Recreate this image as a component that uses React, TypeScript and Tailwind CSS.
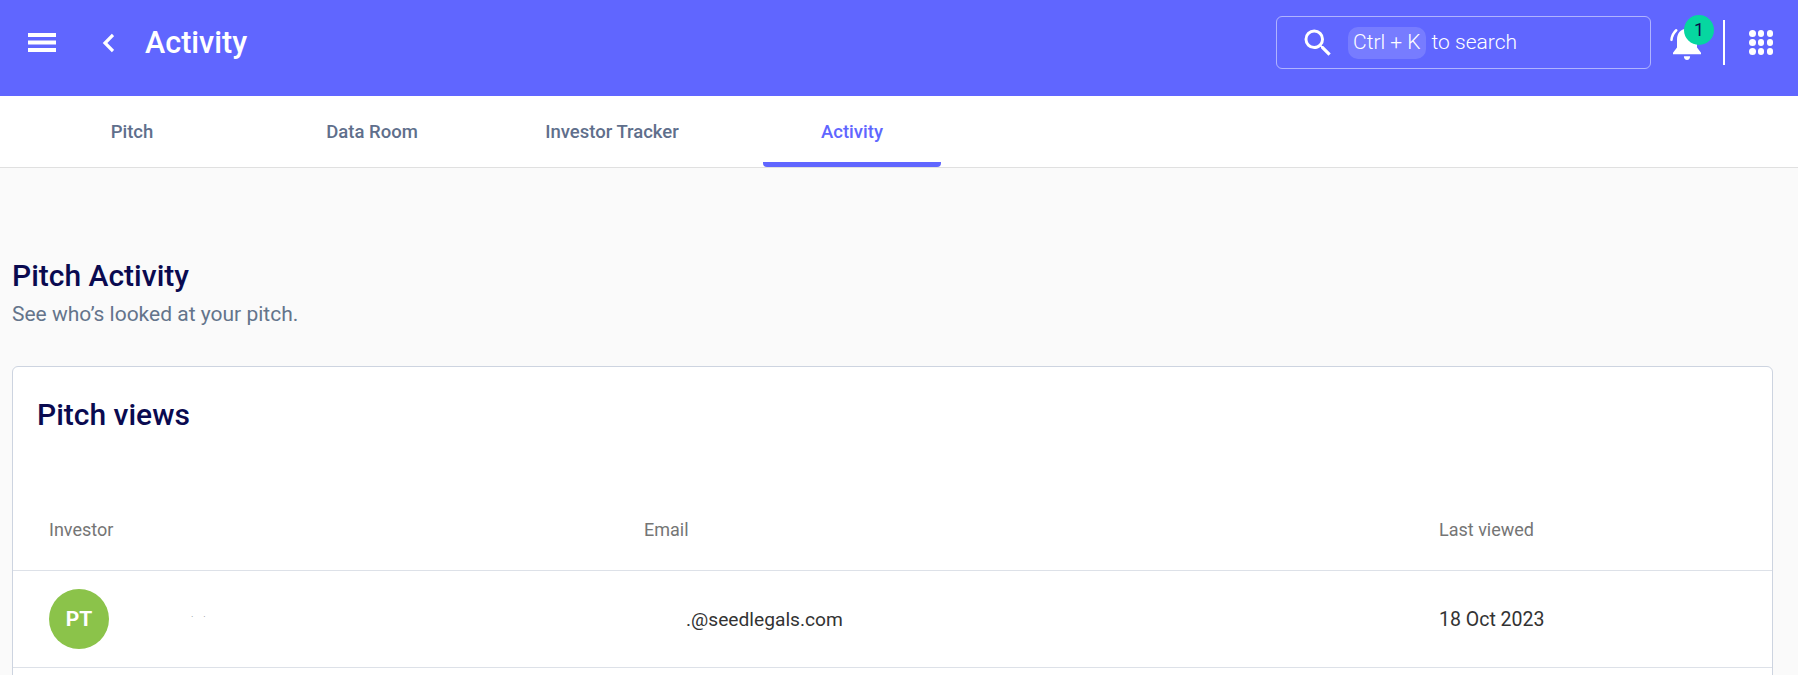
const tabs = ['Pitch', 'Data Room', 'Investor Tracker', 'Activity'];

function MenuIcon() {
  return (
    <svg viewBox="0 0 28 19" className="w-7 h-[19px]" fill="currentColor">
      <rect y="0" width="28" height="4" />
      <rect y="7.500" width="28" height="4" />
      <rect y="15" width="28" height="4" />
    </svg>
  );
}

function BackIcon() {
  return (
    <svg viewBox="0 0 12 20" className="w-3 h-5" fill="none" stroke="currentColor" strokeWidth="3.200">
      <path d="M11 2 L3 10 L11 18" />
    </svg>
  );
}

function SearchIcon() {
  return (
    <svg viewBox="0 0 24 24" className="w-9 h-9" fill="currentColor">
      <path d="M15.500 14h-.79l-.28-.27A6.471 6.471 0 0 0 16 9.500 6.500 6.500 0 1 0 9.500 16c1.610 0 3.090-.59 4.230-1.570l.27.28v.79l5 4.990L20.490 19l-4.990-5zm-6 0C7.010 14 5 11.990 5 9.500S7.010 5 9.500 5 14 7.010 14 9.500 11.990 14 9.500 14z" />
    </svg>
  );
}

function BellIcon() {
  return (
    <svg viewBox="0 0 32 32" className="w-10 h-10 text-white" fill="currentColor">
      <path d="M16 4.500c-5 0-8 3.600-8 8.500v6.500l-3.200 4.200v1.300h22.400v-1.300L24 19.500V13c0-4.900-3-8.500-8-8.500z" />
      <path d="M13.500 26.500h5c0 1.700-1 3-2.500 3s-2.500-1.300-2.500-3z" />
      <path d="M3.600 13.500c.3-3.300 1.500-5.600 3.800-7.700" fill="none" stroke="currentColor" strokeWidth="2" strokeLinecap="round" />
    </svg>
  );
}

function GridIcon() {
  return (
    <div className="grid grid-cols-3 gap-[2.500px] w-6">
      {Array.from({ length: 9 }).map((_, i) => (
        <div key={i} className="w-[6.500px] h-[6.500px] rounded-full bg-white" />
      ))}
    </div>
  );
}

export default function App() {
  return (
    <div className="h-[675px] overflow-hidden bg-[#fafafa] font-['Roboto',sans-serif]">
      {/* Top bar */}
      <header className="h-24 pb-[11px] bg-[#6066ff] flex items-center text-white">
        <div className="ml-7">
          <MenuIcon />
        </div>
        <div className="ml-[46px]">
          <BackIcon />
        </div>
        <h1 className="ml-[31px] pt-[2px] text-[30.500px] font-medium leading-none">Activity</h1>
        <div className="ml-auto flex items-center h-[53px] w-[375px] rounded-md border border-white/50 pl-[23px]">
          <SearchIcon />
          <span className="ml-[12px] px-[5px] h-8 pt-[1px] flex items-center rounded-[10px] bg-white/15 text-[21px] font-light">Ctrl + K</span>
          <span className="ml-[6px] pt-[1px] text-[21px] font-light">to search</span>
        </div>
        <div className="relative ml-4">
          <BellIcon />
          <div className="absolute -top-2 left-[17px] w-[30px] h-[30px] rounded-full bg-[#06d6a0] flex items-center justify-center text-lg text-[#0a0a4a]">1</div>
        </div>
        <div className="ml-4 w-[2px] h-[45px] bg-white" />
        <div className="ml-6 mr-[25px]">
          <GridIcon />
        </div>
      </header>

      {/* Tabs */}
      <nav className="h-[72px] bg-white border-b border-[#e0e0e0] flex pl-3">
        {tabs.map((tab) => (
          <div key={tab} className="w-60 flex justify-center">
            <div className={`w-[178px] pt-[8px] flex items-center justify-center text-[18.500px] font-medium border-b-[5px] rounded-b-sm ${tab === 'Activity' ? 'text-[#6066ff] border-[#6066ff]' : 'text-[#5f6f8c] border-transparent'}`}>
              {tab}
            </div>
          </div>
        ))}
      </nav>

      <main className="pl-3 pr-[25px] pt-[90px]">
        <h2 className="text-[30px] leading-[36px] font-medium text-[#0a0a50]">Pitch Activity</h2>
        <p className="mt-[6px] text-[21px] leading-7 text-[#64748b]">See who’s looked at your pitch.</p>

        {/* Pitch views card */}
        <section className="mt-[38px] bg-white border border-[#cdd4e0] rounded-md">
          <h3 className="pl-6 pt-[28px] h-[126px] text-[30px] leading-[40px] font-medium text-[#0a0a50]">Pitch views</h3>
          <div className="h-[78px] flex items-center pl-9 text-[18px] text-[#757575] border-b border-[#dde1e8]">
            <div className="w-[595px] pb-[5px]">Investor</div>
            <div className="w-[795px] pb-[5px]">Email</div>
            <div className="pb-[5px]">Last viewed</div>
          </div>
          <div className="h-[97px] flex items-center pl-9 text-[#333333] border-b border-[#dde1e8]">
            <div className="w-[595px] flex items-center">
              <div className="w-[60px] h-[60px] pt-[2px] rounded-full bg-[#8bc34a] flex items-center justify-center text-white text-[21px] font-bold">PT</div>
              <span className="ml-[82px] mb-1 flex gap-[10px] text-[9px] leading-none text-[#888888]">
                <span>·</span>
                <span>·</span>
              </span>
            </div>
            <div className="w-[795px] pl-[42px] pt-[2px] text-[19.200px]">.@seedlegals.com</div>
            <div className="pt-[2px] text-[19.500px]">18 Oct 2023</div>
          </div>
          <div className="h-12" />
        </section>
      </main>
    </div>
  );
}
